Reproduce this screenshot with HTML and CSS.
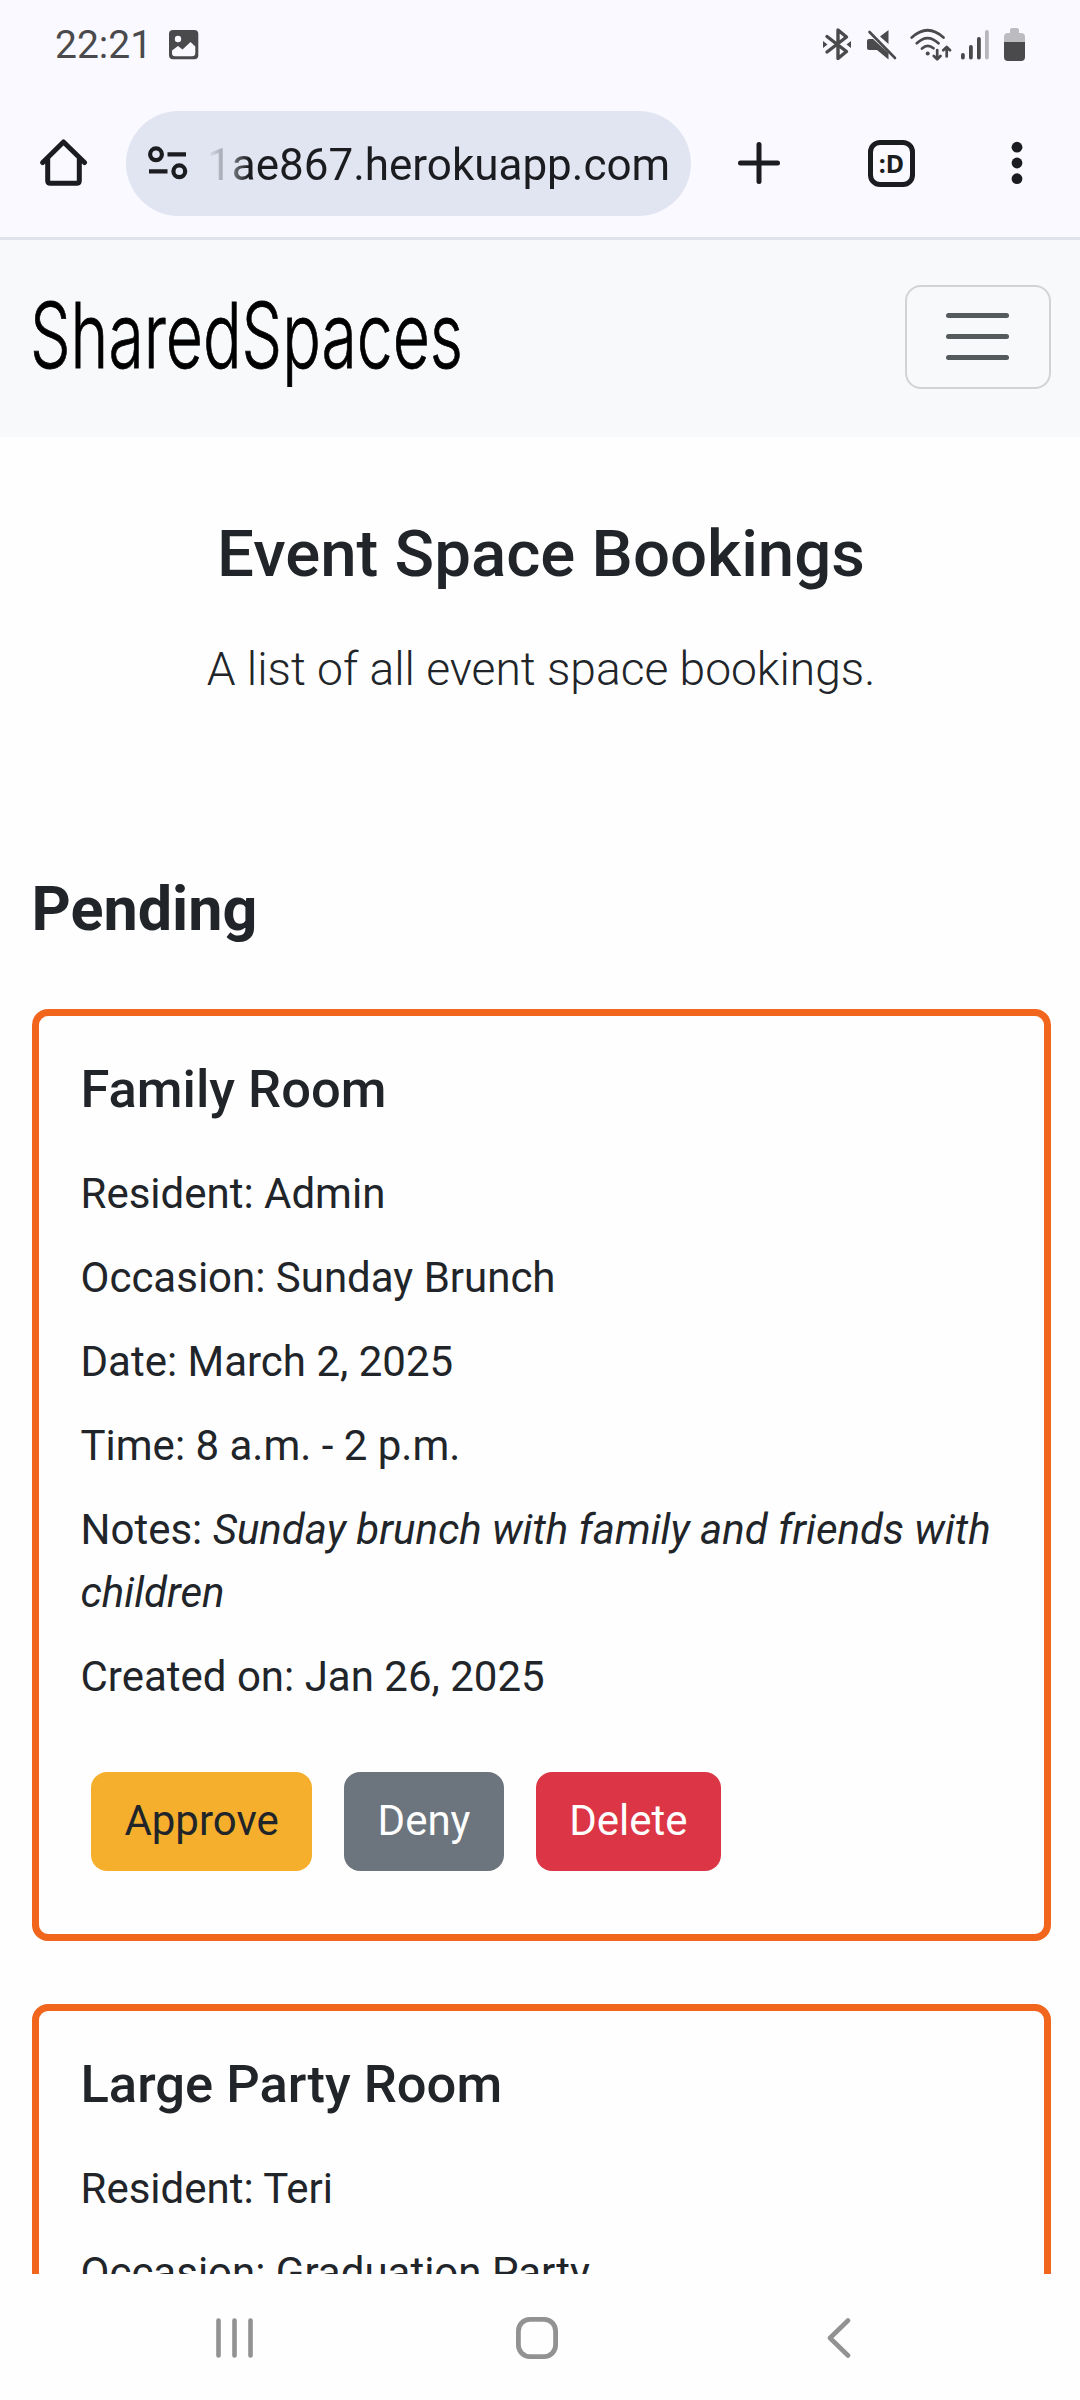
FILE: index.html
```html
<!DOCTYPE html>
<html lang="en">
<head>
<meta charset="utf-8">
<title>SharedSpaces</title>
<link rel="stylesheet" href="styles.css">
</head>
<body>
<div class="status">
  <span class="clock">22:21</span>
  <svg class="photo" width="30" height="30" viewBox="0 0 30 30"><rect width="29.300" height="29.300" rx="4" fill="#4a4a4c"/><circle cx="9" cy="9" r="3.200" fill="#faf9ff"/><path d="M3 23V20.500L9 16L13.500 19.500L21.500 12L26.300 16.500V23Q26.300 26.300 23 26.300H6Q3 26.300 3 23Z" fill="#faf9ff"/></svg>
  <div class="status-icons">
    <svg width="28" height="33" viewBox="0 0 28 33" fill="none" stroke="#4a4a4c" stroke-width="3.400" stroke-linecap="round" stroke-linejoin="round"><path d="M4 8.500L23.500 23.500L15 30.500V2L23.500 9L4 24"/><path d="M0 13L4.500 16.500L0 20ZM28 13L23.500 16.500L28 20Z" fill="#4a4a4c" stroke="none"/></svg>
    <svg class="mute" width="30" height="31" viewBox="0 0 30 31"><path d="M21.500 1V15L13 7.500ZM0 12Q0 10 2 10H6L21.500 24V30.500L10 21H2Q0 21 0 19Z" fill="#4a4a4c"/><path d="M2.500 3L28 29" stroke="#4a4a4c" stroke-width="2.600" stroke-linecap="round"/></svg>
    <svg class="wifi" width="42" height="33" viewBox="0 0 42 33" fill="none" stroke="#4a4a4c" stroke-width="2.700" stroke-linecap="round" stroke-linejoin="round"><path d="M1.800 9.500Q17.500-5 33.500 9.500M6.800 15.300Q17.500 5 28.500 15.300M12 20.500Q17.500 15.500 23.500 20.200"/><circle cx="17.700" cy="25.500" r="2" fill="#4a4a4c" stroke="none"/><path d="M27.200 22V31M23.800 28L27.200 31.300L30.500 28M36.700 28.500V19M33.300 22.300L36.700 19L40 22.300"/></svg>
    <svg class="signal" width="28" height="30" viewBox="0 0 28 30"><rect y="23" width="3.800" height="6.500" rx="1.800" fill="#4a4a4c"/><rect x="8" y="15" width="3.800" height="14.500" rx="1.800" fill="#4a4a4c"/><rect x="16" y="7" width="3.800" height="22.500" rx="1.800" fill="#4a4a4c"/><rect x="24" y="0" width="3.800" height="29.500" rx="1.800" fill="#b7b7bb"/></svg>
    <svg class="battery" width="21" height="33" viewBox="0 0 21 33"><path d="M0 14V9Q0 5 4 5H6V2Q6 0 8 0H13Q15 0 15 2V5H17Q21 5 21 9V14Z" fill="#bbbbc0"/><path d="M0 14H21V29Q21 33 17 33H4Q0 33 0 29Z" fill="#4a4a4c"/></svg>
  </div>
</div>
<div class="browser">
  <svg class="home" width="48" height="48" viewBox="0 0 48 48" fill="none" stroke="#1b1c20" stroke-width="5" stroke-linejoin="round" stroke-linecap="round"><path d="M2.700 23.500L23.500 3L44.500 23.500M7.700 20V41.500Q7.700 44.300 10.500 44.300H36.500Q39.300 44.300 39.300 41.500V20"/></svg>
  <div class="url">
    <svg width="40" height="34" viewBox="0 0 40 34" fill="none" stroke="#1b1c20" stroke-width="4.200"><circle cx="8" cy="8.300" r="5.900"/><path d="M19.500 8.300H38M1 25.300H19.500"/><circle cx="31.300" cy="25.300" r="5.900"/></svg>
    <span class="address">1ae867.herokuapp.com</span>
  </div>
  <svg class="plus" width="42" height="42" viewBox="0 0 42 42" stroke="#1b1c20" stroke-width="5" stroke-linecap="round"><path d="M21 2.500V39.500M2.500 21H39.500"/></svg>
  <div class="tabs">:D</div>
  <svg class="dots" width="12" height="44" viewBox="0 0 12 44" fill="#1b1c20"><circle cx="6" cy="6.200" r="5.400"/><circle cx="6" cy="22" r="5.400"/><circle cx="6" cy="37.700" r="5.400"/></svg>
</div>
<main class="viewport">
  <nav class="navbar">
    <svg class="brand" width="440" height="110" viewBox="0 0 440 110"><text x="-3" y="82" textLength="433" lengthAdjust="spacingAndGlyphs">SharedSpaces</text></svg>
    <div class="toggler"><i></i><i></i><i></i></div>
  </nav>
  <header class="intro">
    <h2>Event Space Bookings</h2>
    <p>A list of all event space bookings.</p>
  </header>
  <h3>Pending</h3>
  <section class="card">
    <h5>Family Room</h5>
    <p>Resident: Admin</p>
    <p>Occasion: Sunday Brunch</p>
    <p>Date: March 2, 2025</p>
    <p>Time: 8 a.m. - 2 p.m.</p>
    <p>Notes: <em>Sunday brunch with family and friends with children</em></p>
    <p>Created on: Jan 26, 2025</p>
    <div class="actions">
      <span class="btn approve">Approve</span>
      <span class="btn deny">Deny</span>
      <span class="btn delete">Delete</span>
    </div>
  </section>
  <section class="card">
    <h5>Large Party Room</h5>
    <p>Resident: Teri</p>
    <p>Occasion: Graduation Party</p>
  </section>
</main>
<footer class="sysnav">
  <svg width="38" height="40" viewBox="0 0 38 40" stroke="#929292" stroke-width="4.600" stroke-linecap="round"><path d="M2.500 2.500V37.500M18.500 2.500V37.500M34.500 2.500V37.500"/></svg>
  <svg class="sys-home" width="42" height="42" viewBox="0 0 42 42" fill="none" stroke="#929292" stroke-width="4.800"><rect x="2.400" y="2.400" width="37.200" height="37.200" rx="11.500"/></svg>
  <svg width="24" height="40" viewBox="0 0 24 40" fill="none" stroke="#929292" stroke-width="4.600" stroke-linecap="round" stroke-linejoin="round"><path d="M21 2.500L3 20L21 37.500"/></svg>
</footer>
</body>
</html>
```
FILE: styles.css
```css
* { box-sizing: border-box; }
body {
  margin: 0;
  width: 1080px;
  height: 2400px;
  overflow: hidden;
  display: flex;
  flex-direction: column;
  background: #fefefe;
  color: #212529;
  font: 42px/63px Roboto, sans-serif;
}
svg { display: block; flex: none; }
h2, h3, h5, p { margin: 0; }

.status {
  height: 84px;
  padding: 5px 55px 0;
  display: flex;
  align-items: center;
  background: #faf9ff;
}
.clock { width: 94px; font-size: 39px; line-height: 46px; color: #4a4a4c; white-space: nowrap; }
.photo { margin: 1px 0 0 20px; }
.status-icons { margin-left: auto; display: flex; align-items: center; }
.mute { margin-left: 16px; }
.wifi { margin-left: 13px; }
.signal { margin-left: 9px; }
.battery { margin-left: 15px; }

.browser {
  height: 156px;
  padding: 5px 37px 0 40px;
  border-bottom: 3px solid #dfe2ea;
  display: flex;
  align-items: center;
  background: #faf9ff;
}
.url {
  width: 565px;
  height: 105px;
  margin-left: 38px;
  padding-left: 22px;
  border-radius: 53px;
  display: flex;
  align-items: center;
  background: #e1e5f1;
}
.address {
  margin-left: 19px;
  padding-top: 4px;
  font-size: 44px;
  white-space: nowrap;
  color: transparent;
  background: linear-gradient(90deg, #1b1c2000 0, #1b1c2060 20px, #1b1c20 42px);
  background-clip: text;
  -webkit-background-clip: text;
}
.plus { margin-left: 47px; }
.tabs {
  width: 47px;
  height: 47px;
  margin-left: 88px;
  border: 5px solid #1b1c20;
  border-radius: 12px;
  font: 700 25px/36px "Noto Sans", sans-serif;
  text-align: center;
  color: #1b1c20;
}
.dots { margin-left: auto; margin-right: 20px; }

.viewport { height: 2034px; overflow: hidden; }
.navbar {
  height: 197px;
  padding: 0 29px 0 33px;
  display: flex;
  align-items: center;
  justify-content: space-between;
  background: #f8f9fb;
}
.brand { margin-top: 4px; font: 300 91px Inter, sans-serif; fill: #000; stroke: #000; stroke-width: 0.8px; }
.toggler {
  width: 146px;
  height: 104px;
  margin-top: -3px;
  padding: 0 2px 1px 0;
  border: 2px solid #d2d3d5;
  border-radius: 16px;
  display: flex;
  flex-direction: column;
  align-items: center;
  justify-content: center;
  gap: 16px;
}
.toggler i { width: 63px; height: 5.300px; border-radius: 3px; background: #555a5d; }

.intro { padding: 78px 0 0 2px; text-align: center; }
h2 { font-size: 65.400px; line-height: 78.500px; font-weight: 500; }
.intro p { margin-top: 41px; font-size: 46.150px; line-height: 69px; font-weight: 300; }
h3 { margin: 169px 31.500px 0; font-size: 61.070px; line-height: 73px; font-weight: 700; }

.card {
  margin: 63px 29px 0 32px;
  padding: 42px 42px 42px 41.500px;
  border: 7px solid #f1651d;
  border-radius: 16px;
}
.card h5 { margin-bottom: 41px; font-size: 52.500px; line-height: 63px; font-weight: 500; }
.card p { margin-bottom: 21px; }
.actions { padding: 43px 0 21px 10.500px; display: flex; gap: 32px; }
.btn { padding: 17px 33.400px 19px; border-radius: 16px; color: #fefefe; }
.approve { background: #f5af2d; color: #212529; }
.deny { background: #6c757d; }
.delete { background: #dc3545; }

.sysnav {
  height: 126px;
  padding: 1px 229px 0 216px;
  display: flex;
  align-items: center;
  justify-content: space-between;
  background: #fefefe;
}
.sys-home { margin-right: 8px; }
```
